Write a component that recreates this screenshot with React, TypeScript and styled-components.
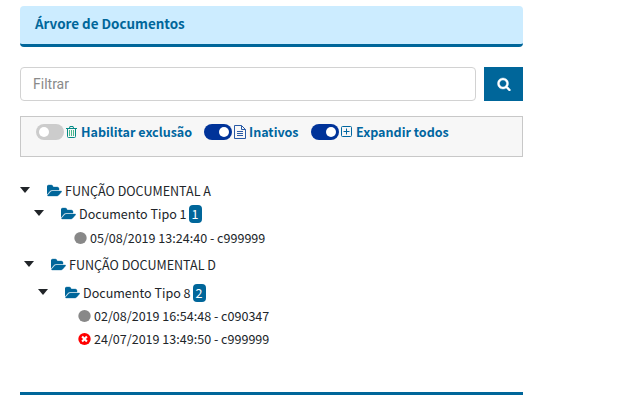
import React from 'react';
import styled, { createGlobalStyle } from 'styled-components';

const GlobalStyle = createGlobalStyle`
  * { box-sizing: border-box; }
  body { margin: 0; background: #fff; color: #212529; font: 12.55px/20px "Noto Sans CJK JP", "Open Sans", sans-serif; }
`;

const Panel = styled.main`
  width: 503px;
  margin: 6px 0 0 20px;
  display: flex;
  flex-direction: column;
`;

const Header = styled.h1`
  height: 41px;
  margin: 0 0 20px;
  padding: 7px 15px 0;
  background: #ccecff;
  border-bottom: 3px solid #00669a;
  border-radius: 4px;
  color: #00669a;
  font-size: 13.4px;
  line-height: 20px;
  font-weight: 700;
`;

const SearchBar = styled.form`
  display: flex;
  gap: 8px;
  height: 34px;
  margin-bottom: 15px;
`;

const SearchInput = styled.input`
  flex: 1;
  min-width: 0;
  padding: 0 12px;
  border: 1px solid #d2d2d2;
  border-radius: 4px;
  font: 14px Roboto, sans-serif;
  outline: none;
  &::placeholder { color: #8a8a8a; opacity: 1; }
`;

const SearchButton = styled.button`
  width: 39px;
  padding: 0;
  border: 0;
  display: flex;
  align-items: center;
  justify-content: center;
  background: #00669a;
  color: #fff;
`;

const Options = styled.section`
  display: flex;
  height: 41px;
  padding: 7px 0 0 15px;
  background: #f7f7f7;
  border: 1px solid #c8c8c8;
`;

const Option = styled.label<{ $width: number }>`
  display: flex;
  align-items: center;
  width: ${p => p.$width}px;
  height: 16px;
  color: #0066a0;
  font-weight: 700;
  white-space: nowrap;
`;

const Switch = styled.span<{ $on?: boolean }>`
  display: flex;
  flex: none;
  align-items: center;
  justify-content: ${p => (p.$on ? 'flex-end' : 'flex-start')};
  width: 28px;
  height: 16px;
  padding: 0 3px;
  border-radius: 8px;
  background: ${p => (p.$on ? '#003399' : '#ccc')};
  &::after { content: ''; width: 10px; height: 10px; border-radius: 50%; background: #fff; }
`;

const OptionIcon = styled.span`
  display: flex;
  flex: none;
  align-items: center;
  width: 17px;
  height: 14px;
  padding-left: 2px;
`;

const Label = styled.span`
  white-space: pre;
`;

const Tree = styled.div`
  display: flex;
  flex-direction: column;
  height: 238px;
  padding-top: 22px;
  border-bottom: 3px solid #00669a;
`;

const Row = styled.div<{ $indent: number; $height: number }>`
  display: flex;
  align-items: center;
  height: ${p => p.$height}px;
  padding-left: ${p => p.$indent}px;
`;

const Caret = styled.span`
  width: 27px;
  height: 9px;
  flex: none;
  &::before { content: ''; display: block; width: 0; border: 5.5px solid transparent; border-top: 6px solid #212529; border-bottom: 0; }
`;

const FolderSlot = styled.span`
  display: flex;
  flex: none;
  width: 18px;
`;

const StatusSlot = styled.span`
  display: flex;
  flex: none;
  width: 16px;
`;

const Badge = styled.span`
  width: 13px;
  height: 18px;
  margin-left: 2px;
  border-radius: 4px;
  background: #00669a;
  color: #fff;
  text-align: center;
  line-height: 18px;
`;

const SearchIcon = () => (
  <svg width="14" height="14" viewBox="0 0 1792 1792" fill="currentColor" stroke="currentColor" strokeWidth="50">
    <path d="M1216 832q0-185-131.5-316.5t-316.5-131.5-316.5 131.5-131.5 316.5 131.5 316.5 316.5 131.5 316.5-131.5 131.5-316.5zm512 832q0 52-38 90t-90 38q-54 0-90-38l-343-342q-179 124-399 124-143 0-273.5-55.5t-225-150-150-225-55.5-273.5 55.5-273.5 150-225 225-150 273.5-55.5 273.5 55.5 225 150 150 225 55.5 273.5q0 220-124 399l343 343q37 37 37 90z" />
  </svg>
);

const TrashIcon = () => (
  <svg width="11" height="12" viewBox="0 0 11 12" fill="none" stroke="#048a86">
    <path d="M0 2.5h11M3.5 2.2l.4-1.7h3.2l.4 1.7M1.5 2.5v8q0 1 1 1h6q1 0 1-1v-8" />
    <path d="M3.5 4v6M5.5 4v6M7.5 4v6" stroke="#38b07e" strokeWidth=".9" />
  </svg>
);

const FileIcon = () => (
  <svg width="12" height="14" viewBox="0 0 12 14" fill="none" stroke="#2859a5">
    <path d="M.5.5h7l4 4v9H.5zM7.5.5v4h4M3 6.5h6M3 8.5h6M3 10.5h6" />
  </svg>
);

const PlusIcon = () => (
  <svg width="11" height="12" viewBox="0 0 11 12" fill="none" stroke="#0066a0">
    <rect x=".5" y=".5" width="10" height="10" rx="1" />
    <path d="M2.5 5.5h6M5.5 2.5v6" />
  </svg>
);

const FolderIcon = () => (
  <svg width="15" height="14" viewBox="0 0 1920 1792" fill="#00669a" stroke="#00669a" strokeWidth="45">
    <path d="M1879 952q0 31-31 66l-336 396q-43 51-120.5 86.5t-143.5 35.5h-1088q-34 0-60.5-13t-26.5-43q0-31 31-66l336-396q43-51 120.5-86.5t143.5-35.5h1088q34 0 60.5 13t26.5 43zm-343-344v160h-832q-94 0-197 47.5t-164 119.5l-337 396-5 6q0-4-.5-12.5t-.5-12.5v-960q0-92 66-158t158-66h320q92 0 158 66t66 158v32h544q92 0 158 66t66 158z" />
  </svg>
);

const StatusIcon = ({ inactive }: { inactive?: boolean }) => (
  <svg width="13" height="12" viewBox="0 0 13 12">
    <ellipse cx="6.5" cy="6" rx="6.2" ry="6" fill={inactive ? '#f00' : '#888'} />
    {inactive && <path d="M4.1 3.6l4.8 4.8M8.9 3.6L4.1 8.4" stroke="#fff" strokeWidth="2.1" />}
  </svg>
);

type BranchProps = { indent: number; height: number; label: string; count?: number };

const Branch = ({ indent, height, label, count }: BranchProps) => (
  <Row $indent={indent} $height={height}>
    <Caret />
    <FolderSlot><FolderIcon /></FolderSlot>
    <Label>{label}</Label>
    {count !== undefined && <Badge>{count}</Badge>}
  </Row>
);

type LeafProps = { indent: number; height: number; label: string; inactive?: boolean };

const Leaf = ({ indent, height, label, inactive }: LeafProps) => (
  <Row $indent={indent} $height={height}>
    <StatusSlot><StatusIcon inactive={inactive} /></StatusSlot>
    <Label>{label}</Label>
  </Row>
);

export default function App() {
  return (
    <>
      <GlobalStyle />
      <Panel>
        <Header>Árvore de Documentos</Header>
        <SearchBar>
          <SearchInput placeholder="Filtrar" />
          <SearchButton type="button" aria-label="Filtrar"><SearchIcon /></SearchButton>
        </SearchBar>
        <Options>
          <Option $width={168}><Switch /><OptionIcon><TrashIcon /></OptionIcon><Label>Habilitar exclusão</Label></Option>
          <Option $width={107}><Switch $on /><OptionIcon><FileIcon /></OptionIcon><Label>Inativos</Label></Option>
          <Option $width={150}><Switch $on /><OptionIcon><PlusIcon /></OptionIcon><Label>Expandir todos</Label></Option>
        </Options>
        <Tree>
          <Branch indent={0} height={24} label="FUNÇÃO DOCUMENTAL A" />
          <Branch indent={14} height={22} label="Documento Tipo 1" count={1} />
          <Leaf indent={54} height={26} label="05/08/2019 13:24:40 - c999999" />
          <Branch indent={4} height={28} label="FUNÇÃO DOCUMENTAL D" />
          <Branch indent={18} height={28} label="Documento Tipo 8" count={2} />
          <Leaf indent={58} height={18} label="02/08/2019 16:54:48 - c090347" />
          <Leaf indent={58} height={28} label="24/07/2019 13:49:50 - c999999" inactive />
        </Tree>
      </Panel>
    </>
  );
}
